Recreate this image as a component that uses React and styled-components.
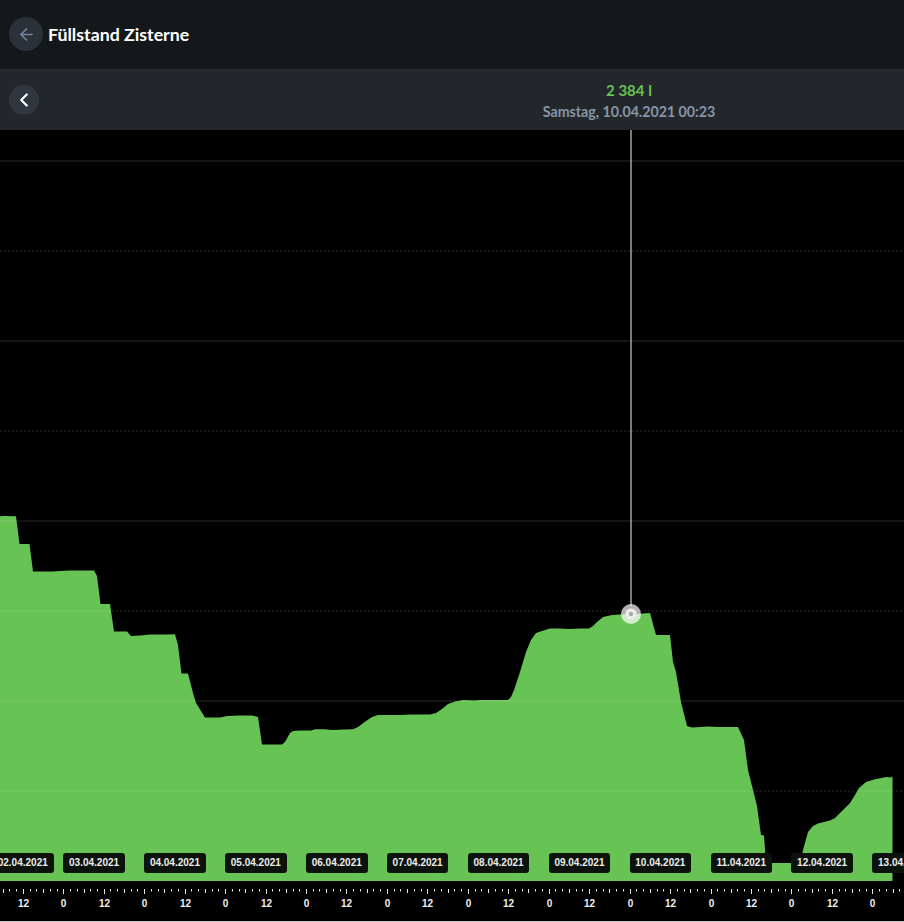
import React from "react";
import { ArrowLeft, ChevronLeft } from "lucide-react";
import styled, { createGlobalStyle } from "styled-components";

const GlobalStyle = createGlobalStyle`
  html, body {
    margin: 0;
    padding: 0;
    background: #000;
  }
  body {
    font-family: "Lato", "Noto Sans", sans-serif;
    overflow: hidden;
  }
`;

const LEVEL = [
  [-2, 880], [-2, 516.5], [5, 516], [16, 516.3], [19.5, 544], [29.5, 544], [33, 571.5], [52, 571.5], [60, 571], [70, 570.6],
  [94, 570.6], [97, 576], [100.5, 604], [110, 604], [114, 631.5], [127, 631.5], [131, 636], [140, 635.5], [150, 634.5],
  [165, 634.6], [175, 634.2], [178, 645], [181.5, 673.5], [188, 673.5], [193, 693], [196, 703], [205, 717.5], [220, 717.5],
  [227, 716], [240, 715.6], [252, 715.6], [258, 717], [262, 744.5], [282, 744.5], [285, 742], [290, 733], [293, 731],
  [300, 730.5], [311, 730.5], [315, 729.3], [325, 729.3], [332, 730], [345, 729.5], [353, 729.3], [358, 727], [366, 721],
  [372, 717], [378, 715], [385, 715], [400, 715], [410, 714.5], [430, 714.5], [436, 713], [442, 709], [448, 704],
  [455, 701.5], [463, 700], [475, 700.5], [480, 700], [508, 700], [511, 697], [514, 690], [520, 672], [526, 652],
  [531, 640], [536, 633], [542, 631], [550, 628.5], [560, 628.5], [570, 629], [580, 628.5], [589, 628.5], [593, 626],
  [597, 622], [603, 617], [612, 615], [620, 614.5], [640, 613.8], [650, 613], [656, 635], [670, 635], [673, 662],
  [676, 672], [681, 702], [687, 726], [692, 727.5], [700, 727], [708, 726.5], [718, 727], [730, 727], [738, 727],
  [744, 740], [748, 770], [757, 806], [761, 835], [764, 835.5], [766, 863], [800, 863], [803, 850], [808, 832],
  [813, 826], [818, 823.5], [830, 820.5], [835, 818], [843, 810], [850, 803], [855, 795], [859, 788], [866, 782],
  [874, 779.5], [886, 777], [890, 777.5], [892.5, 776.5], [892.5, 881], [-2, 881],
];

const GRID = [
  { y: 161 },
  { y: 251, dotted: true },
  { y: 341 },
  { y: 431, dotted: true },
  { y: 521 },
  { y: 611, dotted: true },
  { y: 701 },
  { y: 791, dotted: true },
];

const DAY_WIDTH = 80.9;
const FIRST_MIDNIGHT = 63.3;
const DAYS = ["02", "03", "04", "05", "06", "07", "08", "09", "10", "11", "12", "13"];

const ticks = [];
for (let h = -18; h * (DAY_WIDTH / 24) + FIRST_MIDNIGHT < 904; h += 2) {
  ticks.push({ h, x: Math.round(h * (DAY_WIDTH / 24) + FIRST_MIDNIGHT) + 0.5 });
}

function App() {
  return (
    <Page>
      <GlobalStyle />
      <Header>
        <BackButton>
          <ArrowLeft size={19} strokeWidth={2} />
        </BackButton>
        <Title>Füllstand Zisterne</Title>
      </Header>
      <ValueBar>
        <PrevButton>
          <ChevronLeft size={22} strokeWidth={2.4} />
        </PrevButton>
        <Reading>
          <Amount>2 384 l</Amount>
          <Timestamp>Samstag, 10.04.2021 00:23</Timestamp>
        </Reading>
      </ValueBar>
      <Chart>
        <ChartSvg viewBox="0 130 904 791">
          <polygon points={LEVEL.map((p) => p.join(",")).join(" ")} fill="#67c353" />
          {GRID.map((g) => (
            <line
              key={g.y}
              x1="0"
              x2="904"
              y1={g.y}
              y2={g.y}
              stroke="rgba(255,255,255,0.08)"
              strokeWidth="2"
              strokeDasharray={g.dotted ? "2 2" : undefined}
            />
          ))}
          <line x1="631" x2="631" y1="130" y2="606" stroke="#a6a6a6" strokeWidth="1.5" />
          <circle cx="631" cy="614" r="10" fill="rgba(255,255,255,0.7)" />
          <circle cx="631" cy="614" r="5.5" fill="#eeeeee" />
          <circle cx="631" cy="614" r="2.2" fill="#a8a8a8" />
          {ticks.map((t) => (
            <line
              key={t.h}
              x1={t.x}
              x2={t.x}
              y1="889"
              y2={t.h % 12 === 0 ? 894 : t.h % 6 === 0 ? 893 : 891.5}
              stroke="#e6e6e6"
            />
          ))}
          {ticks
            .filter((t) => t.h % 12 === 0)
            .map((t) => (
              <HourLabel key={t.h} x={t.x} y="906.5" textAnchor="middle">
                {t.h % 24 === 0 ? "0" : "12"}
              </HourLabel>
            ))}
        </ChartSvg>
        {DAYS.map((d, i) => (
          <DayBadge key={d} style={{ left: i === 0 ? -8 : FIRST_MIDNIGHT + (i - 1) * DAY_WIDTH }}>
            {d}.04.2021
          </DayBadge>
        ))}
      </Chart>
    </Page>
  );
}

const Page = styled.div`
  display: flex;
  flex-direction: column;
  width: 904px;
  height: 922px;
  overflow: hidden;
  background: #000;
`;

const Header = styled.header`
  display: flex;
  align-items: center;
  gap: 5px;
  flex: 0 0 69px;
  box-sizing: border-box;
  padding: 0 9px 1px;
  background: #14181b;
`;

const BackButton = styled.div`
  display: flex;
  align-items: center;
  justify-content: center;
  width: 34px;
  height: 34px;
  border-radius: 50%;
  background: #2b3138;
  color: #6f88a3;
`;

const Title = styled.h1`
  margin: 0;
  font-size: 17.75px;
  font-weight: 700;
  color: #fff;
`;

const ValueBar = styled.div`
  position: relative;
  display: flex;
  align-items: center;
  flex: 0 0 61px;
  box-sizing: border-box;
  padding: 0 9px;
  background: #23272b;
  border-top: 1px solid #2a2e32;
`;

const PrevButton = styled.div`
  display: flex;
  align-items: center;
  justify-content: center;
  width: 30px;
  height: 30px;
  border-radius: 50%;
  background: #2f363d;
  color: #fff;
`;

const Reading = styled.div`
  display: flex;
  flex-direction: column;
  align-items: center;
  gap: 4px;
  margin-left: 500px;
  padding-top: 2px;
  width: 180px;
`;

const Amount = styled.div`
  font-size: 15px;
  font-weight: 700;
  line-height: 18px;
  color: #67c353;
`;

const Timestamp = styled.div`
  font-size: 14.2px;
  font-weight: 700;
  line-height: 18px;
  white-space: nowrap;
  color: #8696a7;
`;

const Chart = styled.div`
  position: relative;
  flex: 1;
  border-bottom: 1px solid #c8c8c8;
  overflow: hidden;
`;

const ChartSvg = styled.svg`
  display: block;
  width: 904px;
  height: 791px;
`;

const HourLabel = styled.text`
  font-family: "Liberation Sans", Arial, sans-serif;
  font-size: 10px;
  font-weight: 700;
  fill: #f0f0f0;
`;

const DayBadge = styled.div`
  position: absolute;
  top: 723px;
  box-sizing: border-box;
  width: 61.5px;
  height: 20px;
  border-radius: 3px;
  background: #0c130c;
  color: #ececec;
  font-family: "Liberation Sans", Arial, sans-serif;
  font-size: 10px;
  font-weight: 700;
  line-height: 20px;
  text-align: center;
  white-space: nowrap;
`;

export default App;
